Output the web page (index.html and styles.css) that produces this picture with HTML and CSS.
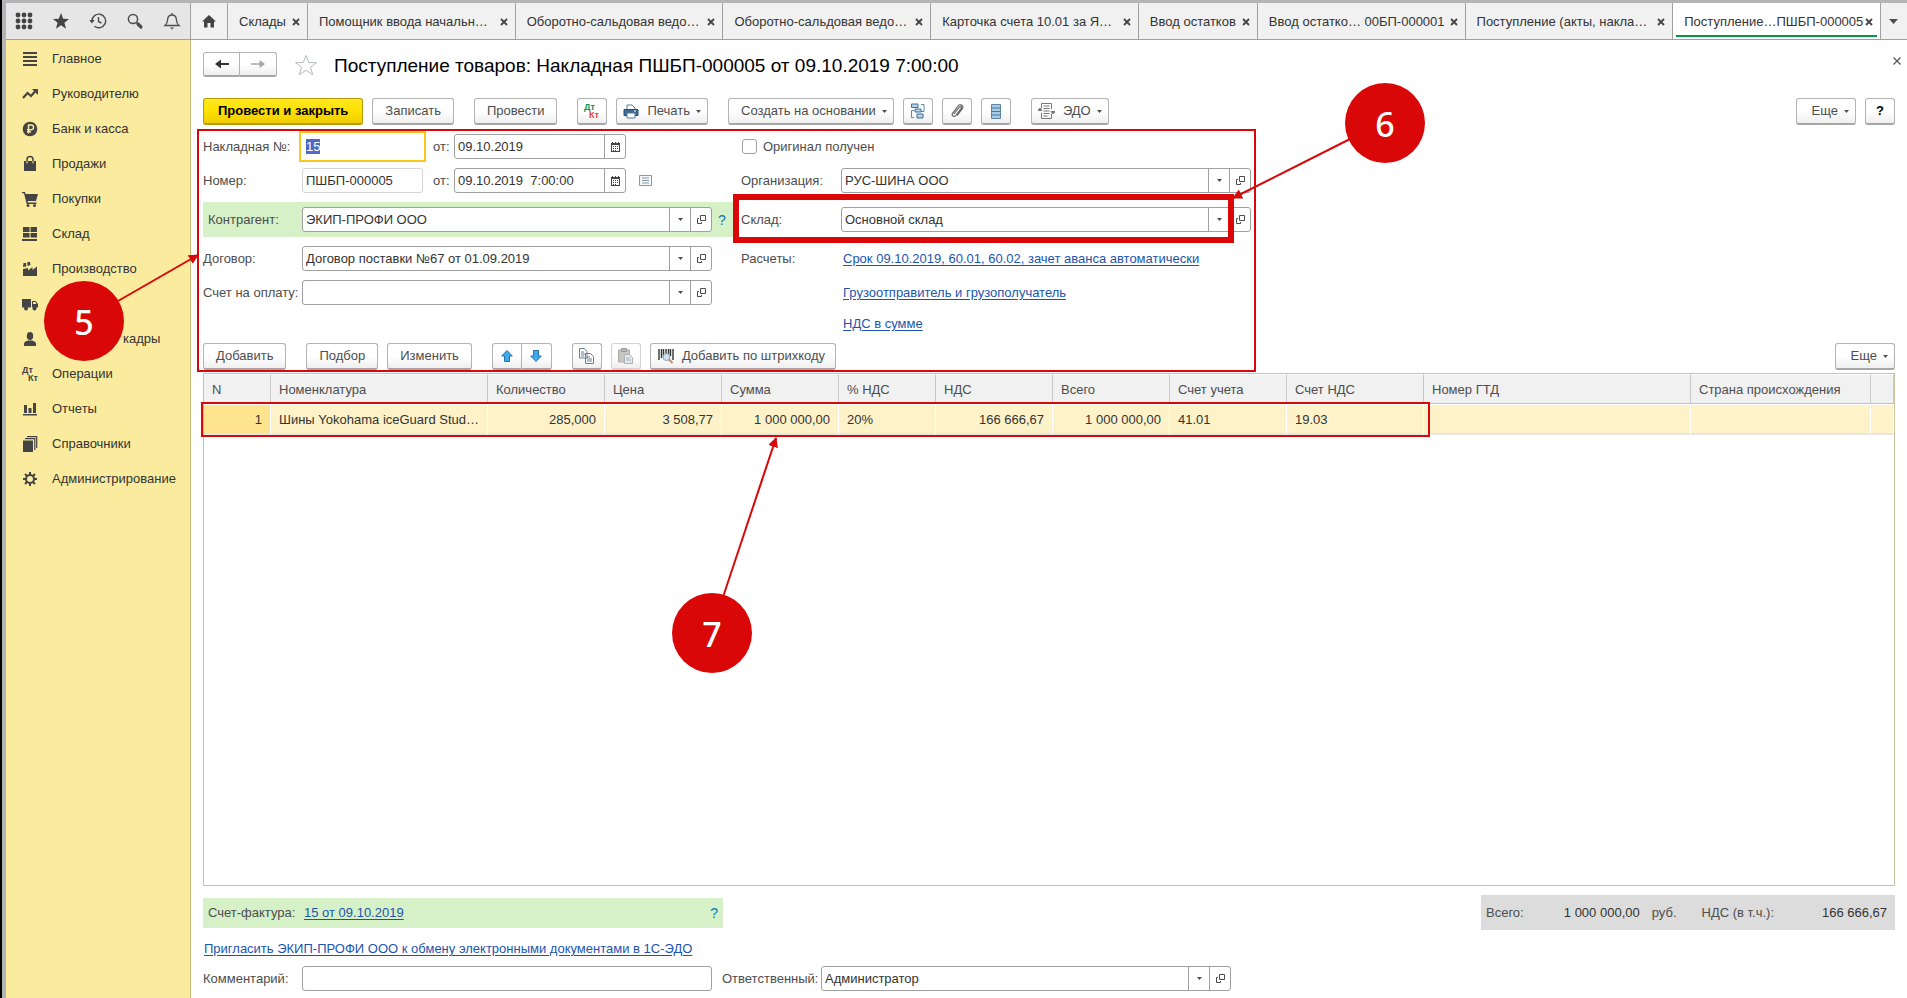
FILE: index.html
```html
<!DOCTYPE html>
<html lang="ru">
<head>
<meta charset="utf-8">
<title>Поступление товаров: Накладная ПШБП-000005</title>
<link rel="stylesheet" href="styles.css">
</head>
<body>
<svg class="defs" aria-hidden="true">
  <symbol id="caret" viewBox="0 0 7 4"><path d="M0 0h7L3.500 4z" fill="#4d4d4d"/></symbol>
  <symbol id="open" viewBox="0 0 9 9"><path d="M3.500 .5h5v5h-5zM2 3.500H.500v5h4V7" fill="none" stroke="#4d4d4d"/></symbol>
  <symbol id="cal" viewBox="0 0 9 10"><path d="M1 0h1v1h2V0h1v1h2V0h1v1h1v9H0V1h1z" fill="#444"/><path d="M1 3h7v6H1z" fill="#fff"/><path d="M2 4h1v1H2zM4 4h1v1H4zM6 4h1v1H6zM2 6h1v1H2zM4 6h1v1H4zM6 6h1v1H6zM2 8h1v1H2zM4 8h1v1H4z" fill="#444"/></symbol>
  <symbol id="cross" viewBox="0 0 8 8"><path d="M1 1l6 6M7 1L1 7" stroke="#444" stroke-width="1.800" fill="none"/></symbol>
</svg>
<div class="app">
  <header class="topbar">
    <div class="tools">
      <button type="button" aria-label="Меню функций"><svg width="18" height="18" viewBox="0 0 18 18" fill="#444"><circle cx="3" cy="3" r="2.400"/><circle cx="9" cy="3" r="2.400"/><circle cx="15" cy="3" r="2.400"/><circle cx="3" cy="9" r="2.400"/><circle cx="9" cy="9" r="2.400"/><circle cx="15" cy="9" r="2.400"/><circle cx="3" cy="15" r="2.400"/><circle cx="9" cy="15" r="2.400"/><circle cx="15" cy="15" r="2.400"/></svg></button>
      <button type="button" aria-label="Избранное"><svg width="18" height="18" viewBox="0 0 18 18"><path d="M9 1l2.200 5.700 5.800.3-4.600 3.700 1.700 6L9 13.300l-5.100 3.400 1.700-6L1 7l5.800-.3z" fill="#444"/></svg></button>
      <button type="button" aria-label="История"><svg width="18" height="18" viewBox="0 0 18 18" fill="none" stroke="#4d4d4d" stroke-width="1.400"><path d="M3 9a6.800 6.800 0 1 1 2.500 5.200M9.500 5v4.500l3 1.500"/><path d="M.300 8h5.400L3 11.500z" fill="#4d4d4d" stroke="none"/></svg></button>
      <button type="button" aria-label="Поиск"><svg width="18" height="18" viewBox="0 0 18 18" fill="none" stroke="#4d4d4d"><circle cx="7" cy="7" r="4.600" stroke-width="1.500"/><path d="M10.500 10.500L12 12" stroke-width="1.500"/><path d="M12 12l3 3" stroke-width="3.200" stroke-linecap="round"/></svg></button>
      <button type="button" aria-label="Оповещения"><svg width="18" height="18" viewBox="0 0 18 18" fill="none" stroke="#4d4d4d" stroke-width="1.300"><path d="M2 13.500c2.600-2 2.500-4.500 2.700-6.500C5 4.300 6.800 3 9 3s4 1.300 4.300 4c.2 2 .1 4.500 2.700 6.500zM9 3V1"/><path d="M7 15.500h4L9 17.500z" fill="#4d4d4d" stroke="none"/></svg></button>
    </div>
    <nav class="tabs" aria-label="Открытые окна">
      <div class="tab tab-home"><a href="#" aria-label="Начальная страница"><svg width="14" height="13" viewBox="0 0 14 13"><path d="M7 0l7 6.500h-2V12.500H8.500V8h-3v4.500H2v-6H0z" fill="#444"/></svg></a></div>
      <div class="tab tab-fit"><a href="#">Склады</a><button type="button" aria-label="Закрыть"><svg width="8" height="8"><use href="#cross"/></svg></button></div>
      <div class="tab"><a href="#">Помощник ввода начальн…</a><button type="button" aria-label="Закрыть"><svg width="8" height="8"><use href="#cross"/></svg></button></div>
      <div class="tab"><a href="#">Оборотно-сальдовая ведо…</a><button type="button" aria-label="Закрыть"><svg width="8" height="8"><use href="#cross"/></svg></button></div>
      <div class="tab"><a href="#">Оборотно-сальдовая ведо…</a><button type="button" aria-label="Закрыть"><svg width="8" height="8"><use href="#cross"/></svg></button></div>
      <div class="tab"><a href="#">Карточка счета 10.01 за Я…</a><button type="button" aria-label="Закрыть"><svg width="8" height="8"><use href="#cross"/></svg></button></div>
      <div class="tab tab-fit"><a href="#">Ввод остатков</a><button type="button" aria-label="Закрыть"><svg width="8" height="8"><use href="#cross"/></svg></button></div>
      <div class="tab"><a href="#">Ввод остатко… 00БП-000001</a><button type="button" aria-label="Закрыть"><svg width="8" height="8"><use href="#cross"/></svg></button></div>
      <div class="tab"><a href="#">Поступление (акты, накла…</a><button type="button" aria-label="Закрыть"><svg width="8" height="8"><use href="#cross"/></svg></button></div>
      <div class="tab tab-active"><a href="#">Поступление…ПШБП-000005</a><button type="button" aria-label="Закрыть"><svg width="8" height="8"><use href="#cross"/></svg></button></div>
      <button type="button" class="tabs-more" aria-label="Все окна"><svg width="9" height="5"><use href="#caret"/></svg></button>
    </nav>
  </header>

  <div class="body">
    <nav class="sidebar" aria-label="Разделы">
      <a href="#"><svg viewBox="0 0 16 16"><path d="M1 1h14v2H1zM1 5h14v2H1zM1 9h14v2H1zM1 13h14v2H1z"/></svg>Главное</a>
      <a href="#"><svg viewBox="0 0 16 16"><path d="M1 12l4.500-5 3.500 3 4-4.500" fill="none" stroke="#444" stroke-width="2.200"/><path d="M10 3h6v6z"/></svg>Руководителю</a>
      <a href="#"><svg viewBox="0 0 16 16"><circle cx="8" cy="8" r="7.300"/><path d="M6.500 12.500V4h2.700a2.300 2.300 0 0 1 0 4.700H5M5 10.700h4" fill="none" stroke="#faeb9e" stroke-width="1.400"/></svg>Банк и касса</a>
      <a href="#"><svg viewBox="0 0 16 16"><path d="M2 5h12v10H2z"/><path d="M5 7V3.500a3 3 0 0 1 6 0V7" fill="none" stroke="#444" stroke-width="1.500"/><path d="M5 5v2.500M11 5v2.500" stroke="#faeb9e"/></svg>Продажи</a>
      <a href="#"><svg viewBox="0 0 16 16"><path d="M0 1h3l.6 2H16l-2 7H5.600l.4 1.500h8.500V13H4.700L2 2.300H0z"/><circle cx="6" cy="14.500" r="1.500"/><circle cx="12.500" cy="14.500" r="1.500"/></svg>Покупки</a>
      <a href="#"><svg viewBox="0 0 16 16"><path d="M1 1h6.500v5H1zM8.500 1H15v5H8.500zM1 7h6.500v4.500H1zM8.500 7H15v4.500H8.500zM0 13h15v2H0z"/></svg>Склад</a>
      <a href="#"><svg viewBox="0 0 16 16"><path d="M1 15V8l5-1v2.500L10.500 6v3L15 5.500V15z"/><path d="M1 6l.5-4H4l.3 3.500zM5.500 5L5.300 1H8l.5 3z"/></svg>Производство</a>
      <a href="#" aria-label="ОС и НМА"><svg viewBox="0 0 16 16"><path d="M0 3h9v8.500H0zM10 5h3.500L16 8v3.500h-6z"/><circle cx="4" cy="12.500" r="2"/><circle cx="12.500" cy="12.500" r="2"/><path d="M11 6h2.200l1.400 2H11z" fill="#faeb9e"/></svg></a>
      <a href="#" class="staff"><svg viewBox="0 0 16 16"><ellipse cx="8" cy="5" rx="3.200" ry="4"/><path d="M2 15v-2.500C2 11 4 10 6 9.500h4c2 .5 4 1.500 4 3V15z"/></svg><span>кадры</span></a>
      <a href="#"><svg viewBox="0 0 16 16"><text x="0" y="7" class="dk">Дт</text><text x="6" y="15" class="dk">Кт</text></svg>Операции</a>
      <a href="#"><svg viewBox="0 0 16 16"><path d="M2 4h3v8H2zM6.500 7h3v5h-3zM11 2h3v10h-3zM1 13h14v1.500H1z"/></svg>Отчеты</a>
      <a href="#"><svg viewBox="0 0 16 16"><path d="M1 4.500h10V16H1z"/><path d="M3 2.700h9.800V14M5 .700h9.700V12" fill="none" stroke="#444" stroke-width="1.200"/></svg>Справочники</a>
      <a href="#"><svg viewBox="0 0 16 16"><circle cx="8" cy="8" r="4" fill="none" stroke="#444" stroke-width="2"/><path d="M8 1v3M8 12v3M1 8h3M12 8h3M3 3l2.200 2.200M10.800 10.800L13 13M13 3l-2.200 2.200M5.200 10.800L3 13" stroke="#444" stroke-width="2"/></svg>Администрирование</a>
    </nav>

    <main class="main">
      <div class="titlebar">
        <div class="group nav-group">
          <button type="button" class="btn" aria-label="Назад"><svg width="14" height="10" viewBox="0 0 14 10"><path d="M14 4v2H6v3.500L0 5 6 .5V4z" fill="#333"/></svg></button>
          <button type="button" class="btn" aria-label="Вперед"><svg width="14" height="10" viewBox="0 0 14 10"><path d="M0 4.300v1.400h8.500V9L14 5 8.500 1v3.300z" fill="#a6a6a6"/></svg></button>
        </div>
        <button type="button" class="star" aria-label="В избранное"><svg width="24" height="22" viewBox="0 0 24 22"><path d="M12 1.500l2.700 7 7.800.2-6.100 4.600 2.300 7.400L12 16.300l-6.700 4.400 2.300-7.400L1.500 8.700l7.800-.2z" fill="#fff" stroke="#b4bac0"/></svg></button>
        <h1>Поступление товаров: Накладная ПШБП-000005 от 09.10.2019 7:00:00</h1>
        <button type="button" class="close" aria-label="Закрыть"><svg width="8" height="8" viewBox="0 0 8 8"><path d="M.500 .5l7 7M7.500 .5l-7 7" stroke="#555" stroke-width="1.200"/></svg></button>
      </div>

      <div class="toolbar">
        <button type="button" class="btn primary">Провести и закрыть</button>
        <button type="button" class="btn wide">Записать</button>
        <button type="button" class="btn wide gap">Провести</button>
        <button type="button" class="btn icon gap" aria-label="Движения документа"><svg width="18" height="18" viewBox="0 0 18 18"><text x="1" y="8" class="dt">Дт</text><text x="6" y="16" class="kt">Кт</text></svg></button>
        <button type="button" class="btn menu"><svg width="16" height="15" viewBox="0 0 16 15"><path d="M4 6V1h5l3 3v2" fill="#fff" stroke="#5a7894"/><path d="M1 5.500h14v6H1z" fill="#3b6a94" stroke="#254f75"/><path d="M4 9h8v5H4z" fill="#fff" stroke="#5a7894"/><path d="M11 7h2" stroke="#fff"/></svg>Печать<svg class="caret"><use href="#caret"/></svg></button>
        <button type="button" class="btn menu create gap">Создать на основании<svg class="caret"><use href="#caret"/></svg></button>
        <button type="button" class="btn icon" aria-label="Структура подчиненности"><svg width="16" height="16" viewBox="0 0 16 16"><path d="M4 7.500H1.500v7H4M11 1.500h3v7h-3" fill="none" stroke="#5b87ab"/><path d="M1.500 1h6.500v3.500H1.500zM5 6h6v3H5zM7 11h6v4H7z" fill="#b5d2e8" stroke="#3f7199"/></svg></button>
        <button type="button" class="btn icon" aria-label="Присоединенные файлы"><svg width="14" height="16" viewBox="0 0 14 16"><path d="M4 11l5.500-7c1-1.200 2.600.2 1.700 1.400l-5.400 7.200c-1.800 2-4.600 0-3.200-2.200L8 3c2.200-3 6.500 0 4.200 3l-5 6.500" fill="none" stroke="#666" stroke-width="1.200"/></svg></button>
        <button type="button" class="btn icon" aria-label="Список"><svg width="10" height="15" viewBox="0 0 10 15"><path d="M.500 .5h9v14h-9z" fill="#a9cbe4" stroke="#5b87ab"/><path d="M0 4h10M0 7.500h10M0 11h10" stroke="#4b7699"/></svg></button>
        <button type="button" class="btn menu gap"><svg width="17" height="16" viewBox="0 0 17 16" fill="none" stroke="#777"><path d="M3.500 5V.5h10V6M3.500 10v5.500h10V11M5.500 3h6M5.500 5.500h6M5.500 8h6M5.500 10.500h6M5.500 13h4"/><path d="M0 7.500h4L2 5zM13 8.500h4L15 11z" fill="#777"/></svg>ЭДО<svg class="caret"><use href="#caret"/></svg></button>
        <button type="button" class="btn menu more push">Еще<svg class="caret"><use href="#caret"/></svg></button>
        <button type="button" class="btn icon help">?</button>
      </div>

      <form class="form">
        <div class="col">
          <div class="row">
            <label for="inv">Накладная №:</label>
            <input id="inv" class="field num focused" type="text" value="15">
            <label class="from" for="invdate">от:</label>
            <div class="combo date"><input id="invdate" type="text" value="09.10.2019"><button type="button" aria-label="Выбрать дату"><svg width="9" height="10"><use href="#cal"/></svg></button></div>
          </div>
          <div class="row">
            <label for="num">Номер:</label>
            <input id="num" class="field num pale" type="text" value="ПШБП-000005">
            <label class="from" for="numdate">от:</label>
            <div class="combo date"><input id="numdate" type="text" value="09.10.2019  7:00:00"><button type="button" aria-label="Выбрать дату"><svg width="9" height="10"><use href="#cal"/></svg></button></div>
            <svg class="list" width="13" height="11" viewBox="0 0 13 11"><path d="M.500 .5h12v10H.500z" fill="#f4f8fb" stroke="#8a99a8"/><path d="M3 3h7M3 5.500h7M3 8h7" stroke="#8a99a8"/></svg>
          </div>
          <div class="row padded green">
            <label for="contr">Контрагент:</label>
            <div class="combo"><select id="contr"><option>ЭКИП-ПРОФИ ООО</option></select><span class="drop"><svg class="caret"><use href="#caret"/></svg></span><button type="button" aria-label="Открыть"><svg width="9" height="9"><use href="#open"/></svg></button></div>
            <a href="#" class="q">?</a>
          </div>
          <div class="row">
            <label for="dog">Договор:</label>
            <div class="combo"><select id="dog"><option>Договор поставки №67 от 01.09.2019</option></select><span class="drop"><svg class="caret"><use href="#caret"/></svg></span><button type="button" aria-label="Открыть"><svg width="9" height="9"><use href="#open"/></svg></button></div>
          </div>
          <div class="row">
            <label for="bill">Счет на оплату:</label>
            <div class="combo"><select id="bill"><option></option></select><span class="drop"><svg class="caret"><use href="#caret"/></svg></span><button type="button" aria-label="Открыть"><svg width="9" height="9"><use href="#open"/></svg></button></div>
          </div>
        </div>
        <div class="col right">
          <div class="row"><input id="orig" class="check" type="checkbox"><label class="check-label" for="orig">Оригинал получен</label></div>
          <div class="row">
            <label for="org">Организация:</label>
            <div class="combo"><select id="org"><option>РУС-ШИНА ООО</option></select><span class="drop"><svg class="caret"><use href="#caret"/></svg></span><button type="button" aria-label="Открыть"><svg width="9" height="9"><use href="#open"/></svg></button></div>
          </div>
          <div class="row padded">
            <label for="store">Склад:</label>
            <div class="combo"><select id="store"><option>Основной склад</option></select><span class="drop"><svg class="caret"><use href="#caret"/></svg></span><button type="button" aria-label="Открыть"><svg width="9" height="9"><use href="#open"/></svg></button></div>
          </div>
          <div class="row"><span class="label">Расчеты:</span><a href="#" class="link">Срок 09.10.2019, 60.01, 60.02, зачет аванса автоматически</a></div>
          <div class="row"><span class="label"></span><a href="#" class="link">Грузоотправитель и грузополучатель</a></div>
          <div class="row last"><span class="label"></span><a href="#" class="link">НДС в сумме</a></div>
        </div>
      </form>

      <div class="toolbar table-tools">
        <button type="button" class="btn wide">Добавить</button>
        <button type="button" class="btn wide gap">Подбор</button>
        <button type="button" class="btn wide">Изменить</button>
        <div class="group gap">
          <button type="button" class="btn icon" aria-label="Вверх"><svg width="12" height="12" viewBox="0 0 12 12"><path d="M6 .5L11.300 6H8.500v5.500h-5V6H.700z" fill="#3fa9ea" stroke="#2274ad"/></svg></button>
          <button type="button" class="btn icon" aria-label="Вниз"><svg width="12" height="12" viewBox="0 0 12 12"><path d="M6 11.500L.700 6h2.800V.5h5V6h2.800z" fill="#3fa9ea" stroke="#2274ad"/></svg></button>
        </div>
        <button type="button" class="btn icon gap" aria-label="Копировать"><svg width="15" height="16" viewBox="0 0 15 16" fill="#fff" stroke="#6b7f91"><path d="M.500 .5h5l2.500 3v6.500H.500zM6.500 5.500h5l3 3v7h-8z"/><path d="M2 4h3M2 6h4M2 8h3M8 9h3M8 11h5M8 13h5"/></svg></button>
        <button type="button" class="btn icon off" disabled aria-label="Вставить"><svg width="15" height="16" viewBox="0 0 15 16"><path d="M.500 2h11v12H.500z" fill="#c9c5c0" stroke="#aaa"/><path d="M3.500 .5h5v3h-5z" fill="#bbb" stroke="#999"/><path d="M6.500 6.500h5l3 3v6h-8z" fill="#e4e8ea" stroke="#aab3b9"/><path d="M8 10h4M8 12h5" stroke="#aab3b9"/></svg></button>
        <button type="button" class="btn menu barcode"><svg width="16" height="16" viewBox="0 0 16 16"><path d="M1 1v11M3.500 1v9M5.500 1v7M8 1v5M10.500 1v5M12.500 1v7M15 1v11" stroke="#333" stroke-width="1.400"/><circle cx="8.500" cy="9" r="3.500" fill="#cfe3f2" stroke="#8aa0b4"/><path d="M11 11.500l3.500 3.500" stroke="#c58a6a" stroke-width="2"/></svg>Добавить по штрихкоду</button>
        <button type="button" class="btn menu more push">Еще<svg class="caret"><use href="#caret"/></svg></button>
      </div>

      <div class="grid">
        <table>
          <colgroup><col class="c67"><col class="c217"><col class="c117"><col class="c117"><col class="c117"><col class="c97"><col class="c117"><col class="c117"><col class="c117"><col class="c137"><col class="c267"><col class="c180"><col></colgroup>
          <thead><tr><th>N</th><th>Номенклатура</th><th>Количество</th><th>Цена</th><th>Сумма</th><th>% НДС</th><th>НДС</th><th>Всего</th><th>Счет учета</th><th>Счет НДС</th><th>Номер ГТД</th><th>Страна происхождения</th><th></th></tr></thead>
          <tbody><tr><td class="r sel">1</td><td>Шины Yokohama iceGuard Stud…</td><td class="r">285,000</td><td class="r">3 508,77</td><td class="r">1 000 000,00</td><td>20%</td><td class="r">166 666,67</td><td class="r">1 000 000,00</td><td>41.01</td><td>19.03</td><td></td><td></td><td></td></tr></tbody>
        </table>
      </div>

      <div class="summary">
        <div class="invoice"><span>Счет-фактура:</span><a href="#" class="link">15 от 09.10.2019</a><a href="#" class="q">?</a></div>
        <div class="totals"><span>Всего:</span><output class="sum">1 000 000,00</output><span class="rub">руб.</span><span>НДС (в т.ч.):</span><output class="vat">166 666,67</output></div>
      </div>
      <div class="invite"><a href="#" class="link">Пригласить ЭКИП-ПРОФИ ООО к обмену электронными документами в 1С-ЭДО</a></div>
      <div class="row bottom">
        <label for="comm">Комментарий:</label>
        <input id="comm" class="field comment" type="text">
        <label class="resp" for="resp">Ответственный:</label>
        <div class="combo"><select id="resp"><option>Администратор</option></select><span class="drop"><svg class="caret"><use href="#caret"/></svg></span><button type="button" aria-label="Открыть"><svg width="9" height="9"><use href="#open"/></svg></button></div>
      </div>
    </main>
  </div>
</div>

<svg class="notes" width="1440" height="680" viewBox="0 0 1440 680">
  <defs><marker id="head" markerUnits="userSpaceOnUse" markerWidth="10" markerHeight="10" refX="9" refY="5" orient="auto"><path d="M0 0l10 5-10 5z" fill="#d90707"/></marker></defs>
  <g fill="none" stroke="#d90707" stroke-width="2">
    <path d="M198 130h1057v241H198z"/>
    <path d="M202 403h1227v33H202z"/>
    <path d="M736 197h495v43H736z" stroke-width="6"/>
    <path d="M118 301L198 255" marker-end="url(#head)"/>
    <path d="M1350 139L1233 198" marker-end="url(#head)"/>
    <path d="M723 597L776 438" marker-end="url(#head)"/>
  </g>
  <g fill="#d90707"><circle cx="84" cy="321" r="40"/><circle cx="1385" cy="123" r="40"/><circle cx="712" cy="633" r="40"/></g>
  <g class="digits"><text x="84" y="335">5</text><text x="1385" y="137">6</text><text x="712" y="647">7</text></g>
</svg>
<script src="app.js"></script>
</body>
</html>
```
FILE: styles.css
```css
* { box-sizing: border-box; }
body { margin: 0; background: #b4b4b6; color: #333; font: 13px/16px "Liberation Sans", Arial, sans-serif; }
button, input, select { font: inherit; color: inherit; margin: 0; padding: 0; }
button { border: 0; background: none; }
a { color: inherit; text-decoration: none; }
svg { flex: none; }
.defs { position: absolute; width: 0; height: 0; }
.app { min-height: 100vh; display: flex; flex-direction: column; padding: 3px 0 0 4px; border-left: 2px solid #000; }

.topbar { display: flex; height: 37px; background: #f1f1f1; border-bottom: 1px solid #a0a0a0; }
.tools { flex: none; width: 185px; display: flex; background: #e6e6e6; border-right: 1px solid #a0a0a0; }
.tools button { flex: 1; display: flex; align-items: center; justify-content: center; }
.tabs { flex: 1; display: flex; min-width: 0; }
.tab { flex: 0 1 208px; min-width: 0; display: flex; align-items: center; padding: 1px 7px 0 11px; border-right: 1px solid #a0a0a0; }
.tab a { flex: 1; white-space: nowrap; overflow: hidden; line-height: 20px; }
.tab button { display: flex; }
.tab-fit { flex: none; gap: 6px; }
.tab-home { flex: 0 0 37px; padding: 0 11px; }
.tab-home a { display: flex; }
.tab-active { background: linear-gradient(#009646, #009646) center 32px / calc(100% - 6px) 2px no-repeat #fff; }
.tabs-more { flex: 0 0 26px; display: flex; align-items: center; justify-content: center; }

.body { flex: 1; display: flex; }
.sidebar { flex: none; width: 185px; background: #faeb9e; border-right: 1px solid #c8b978; padding-top: 1px; }
.sidebar a { display: flex; align-items: center; gap: 14px; height: 35px; padding-left: 16px; white-space: nowrap; }
.sidebar svg { width: 16px; height: 16px; fill: #444; overflow: visible; }
.staff span { padding-left: 71px; }
.dk, .dt, .kt { font: bold 9px "Liberation Sans", Arial, sans-serif; }
.dt { fill: #0a9650; }
.kt { fill: #e04545; }

.main { flex: 1; min-width: 0; display: flex; flex-direction: column; padding: 12px 12px 7px; background: #fff; }
.titlebar { display: flex; align-items: center; height: 25px; }
.star { display: flex; margin: 0 16px 0 17px; }
h1 { margin: 0; padding-top: 2px; font-size: 19px; line-height: 25px; font-weight: normal; color: #000; white-space: nowrap; }
.close { margin: 0 -6px 8px auto; display: flex; }

.toolbar { display: flex; gap: 9px; margin-top: 21px; height: 27px; }
.btn { height: 27px; border: 1px solid #b3b3b3; border-bottom: 2px solid #a6a6a6; border-radius: 3px; background: linear-gradient(#fff 50%, #efefef); color: #4d4d4d; padding: 0 12px; display: flex; align-items: center; justify-content: center; white-space: nowrap; }
.btn.primary { background: linear-gradient(#ffe81f, #ffe000 50%, #f0cd00); border-color: #b79b00; color: #000; font-weight: bold; padding: 0 14px; }
.btn.icon { width: 30px; padding: 0; }
.btn.menu { padding: 0 6px; gap: 8px; }
.btn.menu .caret { margin-left: -2px; }
.btn.menu.create { padding-left: 12px; }
.btn.menu.more { padding-left: 15px; }
.btn.help { color: #000; font-weight: bold; }
.btn.off { border-color: #d4d4d4; }
.gap { margin-left: 11px; }
.push { margin-left: auto; }
.caret { width: 5px; height: 3px; }
.group { display: flex; }
.group .btn:first-child { border-radius: 3px 0 0 3px; }
.group .btn + .btn { border-radius: 0 3px 3px 0; border-left: 0; }
.nav-group .btn { width: 37px; height: 25px; padding: 0; }

.form { display: flex; gap: 8px; margin-top: 9px; }
.col { flex: 0 0 530px; display: flex; flex-direction: column; gap: 9px; }
.right { flex: 0 0 510px; }
.row { display: flex; align-items: center; height: 25px; }
.row label, .label { flex: none; width: 99px; color: #4d4d4d; white-space: nowrap; }
.right .row label, .right .label { width: 100px; }
.row.padded { height: 35px; }
.row.green { background: #d6f0c8; }
.green label { padding-left: 5px; }
.row.last { height: 20px; }
.field, .combo { height: 25px; border: 1px solid #a0a0a0; border-radius: 3px; background: #fff; }
.field { padding: 0 3px; outline: 0; }
.num { width: 121px; }
.pale { border-color: #d5d5d5; }
.focused { width: 127px; height: 31px; margin: 0 -3px; border: 2px solid #fcc61b; border-radius: 0; padding: 0 5px; }
.focused::selection { background: #4f69c6; color: #fff; }
.row .from { width: 31px; padding-left: 10px; }
.combo { width: 410px; display: flex; }
.combo input, .combo select { flex: 1; min-width: 0; border: 0; outline: 0; background: none; appearance: none; padding: 0 3px; }
.combo input { white-space: pre; }
.combo button, .drop { flex: none; width: 21px; border-left: 1px solid #a0a0a0; display: flex; align-items: center; justify-content: center; }
.combo.date { width: 172px; }
.list { margin-left: 13px; }
.q { color: #0a78b8; margin-left: 6px; font-size: 14px; }
.row .check { appearance: none; width: 15px; height: 15px; border: 1px solid #a0a0a0; border-radius: 3px; background: #fff; margin-left: 1px; }
.right .row .check-label { width: auto; padding-left: 6px; }
.link { color: #1b55b0; text-decoration: underline; text-underline-offset: 2px; white-space: nowrap; }
.right .link { margin-left: 2px; }

.table-tools { margin-top: 9px; }
.btn.menu.barcode { padding: 0 10px 0 7px; }

.grid { flex: 1; margin-top: 3px; border: 1px solid #c8c4a0; }
table { width: 100%; table-layout: fixed; border-collapse: separate; border-spacing: 0; }
th, td { padding: 1px 8px 0; text-align: left; font-weight: normal; white-space: nowrap; overflow: hidden; border-right: 1px solid #fff; }
th { height: 30px; background: #f1f1f1; color: #4d4d4d; border-right-color: #c8c8c8; border-bottom: 1px solid #c0c0c0; border-top: 1px solid #fff; }
td { height: 31px; background: #fdf2c8; border-bottom: 2px solid #e6e6e6; border-top: 1px solid #fff; }
td.sel { background: #ffe48f; }
td.r { text-align: right; }
.c67 { width: 67px; } .c217 { width: 217px; } .c117 { width: 117px; } .c97 { width: 97px; } .c137 { width: 137px; } .c267 { width: 267px; } .c180 { width: 180px; }

.summary { display: flex; justify-content: space-between; align-items: center; margin-top: 9px; height: 35px; color: #4d4d4d; }
.invoice { width: 520px; height: 30px; background: #d6f0c8; display: flex; align-items: center; padding: 0 5px; }
.invoice span { width: 96px; }
.invoice .q { margin-left: auto; }
.totals { width: 414px; height: 35px; background: #dcdcdc; display: flex; align-items: center; padding: 0 8px 0 5px; }
.totals output { color: #333; text-align: right; }
.sum { width: 116px; }
.rub { margin: 0 25px 0 12px; }
.vat { flex: 1; }
.invite { margin-top: 11px; height: 16px; padding-left: 1px; }
.bottom { margin-top: 9px; }
.comment { width: 410px; }
.row .resp { padding-left: 10px; width: 109px; }

.notes { position: absolute; left: 0; top: 0; pointer-events: none; }
.digits { fill: #fff; font: 500 34px "Noto Sans", "Open Sans", sans-serif; text-anchor: middle; }
```
FILE: app.js
```js
const first = document.getElementById("inv");
first.focus();
first.select();
```
